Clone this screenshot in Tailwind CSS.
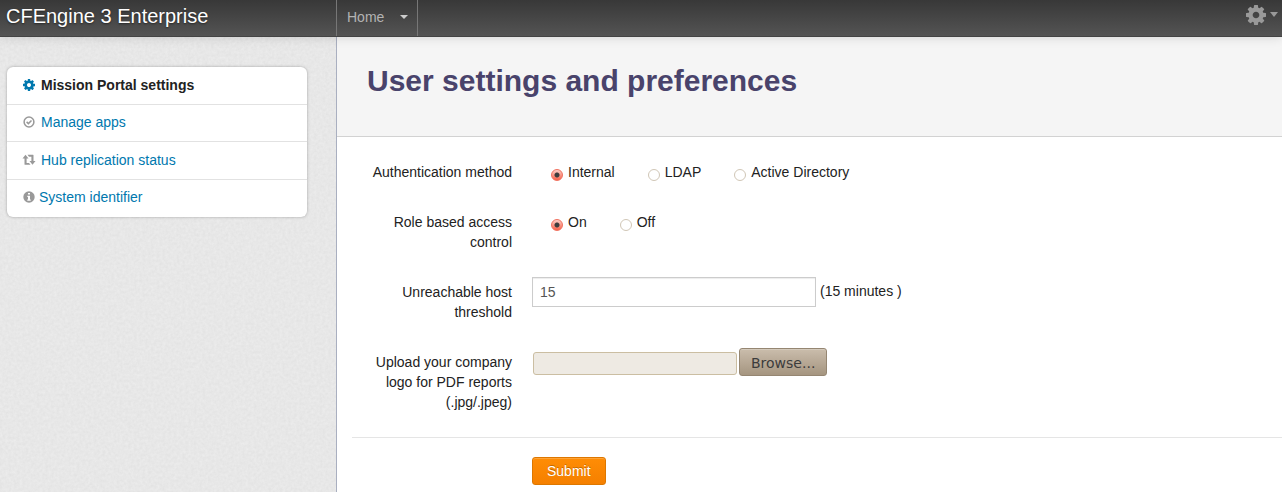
<!DOCTYPE html>
<html lang="en">
<head>
<meta charset="utf-8">
<meta name="viewport" content="width=device-width, initial-scale=1">
<title>CFEngine 3 Enterprise</title>
<script src="https://cdn.jsdelivr.net/npm/@tailwindcss/browser@4"></script>
</head>
<body class="flex min-h-screen flex-col bg-white font-['Liberation_Sans',Arial,sans-serif] text-sm leading-5 text-[#222222]">
<svg class="hidden">
  <symbol id="cog" viewBox="0 128 1536 1536"><path d="M1024 896q0-106-75-181t-181-75-181 75-75 181 75 181 181 75 181-75 75-181zm512-109v222q0 12-8 23t-20 13l-185 28q-19 54-39 91 35 50 107 138 10 12 10 25t-9 23q-27 37-99 108t-94 71q-12 0-26-9l-138-108q-44 23-91 38-16 136-29 186-7 28-36 28h-222q-14 0-24.500-8.500t-11.500-21.500l-28-184q-49-16-90-37l-141 107q-10 9-25 9-14 0-25-11-126-114-165-168-7-10-7-23 0-12 8-23 15-21 51-66.500t54-70.500q-27-50-41-99l-183-27q-13-2-21-12.500t-8-23.500v-222q0-12 8-23t19-13l186-28q14-46 39-92-40-57-107-138-10-12-10-24 0-10 9-23 26-36 98.500-107.500t94.500-71.500q13 0 26 10l138 107q44-23 91-38 16-136 29-186 7-28 36-28h222q14 0 24.500 8.500t11.500 21.500l28 184q49 16 90 37l142-107q9-9 24-9 13 0 25 10 129 119 165 170 7 8 7 22 0 12-8 23-15 21-51 66.500t-54 70.500q26 50 41 98l183 28q13 2 21 12.500t8 23.500z"/></symbol>
</svg>

<header class="relative z-10 flex h-[37px] shrink-0 border-b border-[#444444] bg-linear-to-b from-[#383838] to-[#545454] shadow-[0_1px_10px_rgba(0,0,0,0.12)]">
  <a href="#" class="w-[336px] shrink-0 truncate pl-1.5 text-xl leading-8 text-white [text-shadow:0_1px_2px_rgba(0,0,0,0.5)]">CFEngine 3 Enterprise</a>
  <nav class="flex flex-1 justify-between">
    <button type="button" class="flex items-center gap-4 border-x border-[#777777] px-[9px] pl-2.5 pb-0.5 text-[#b3b3b3]">Home
      <svg class="-mt-px h-1 w-2 fill-[#cccccc]" viewBox="0 0 8 4"><path d="M0 0h8L4 4z"/></svg>
    </button>
    <button type="button" aria-label="Settings" class="flex items-center gap-1 pr-1 pb-[7px] text-[#999999]">
      <svg class="size-5 fill-current"><use href="#cog"/></svg>
      <svg class="h-[5px] w-2 fill-current" viewBox="0 0 8 5"><path d="M0 0h8L4 5z"/></svg>
    </button>
  </nav>
</header>

<div class="flex flex-1">
  <aside class="relative w-[337px] shrink-0 border-r border-[#a9afc0] bg-[#e6e6e6] pt-[30px] pr-[29px] pl-[7px]">
    <svg class="absolute inset-0 h-full w-full" aria-hidden="true">
      <filter id="grain" x="0" y="0" width="100%" height="100%" color-interpolation-filters="sRGB">
        <feTurbulence type="fractalNoise" baseFrequency="0.35" numOctaves="3" seed="4"/>
        <feColorMatrix type="matrix" values="0.05 0 0 0 0.882  0.05 0 0 0 0.882  0.05 0 0 0 0.882  0 0 0 0 1"/>
      </filter>
      <rect width="100%" height="100%" filter="url(#grain)"/>
    </svg>
    <ul class="relative grid min-h-[150px] auto-rows-fr divide-y divide-[#e2e2e2] rounded-md bg-white text-[#0078ae] shadow-[0_0_3px_rgba(0,0,0,0.3)]">
      <li class="flex items-center px-4"><a href="#" class="flex items-center gap-1.5 font-bold text-[#222222]">
        <svg class="size-3 fill-[#0078ae]"><use href="#cog"/></svg>Mission Portal settings</a></li>
      <li class="flex items-center px-4 pb-px"><a href="#" class="flex items-center gap-1.5">
        <svg class="size-3 fill-none stroke-[#999999]" viewBox="0 0 12 12"><circle cx="6" cy="6" r="4.900" stroke-width="1.500"/><path d="M3.600 5.900L5.400 7.600 8.500 4.500" stroke-width="1.500"/></svg>Manage apps</a></li>
      <li class="flex items-center px-4"><a href="#" class="flex items-center gap-1.5">
        <svg class="size-3 overflow-visible fill-[#999999]" viewBox="0 0 12 12"><path d="M2.500 .8L5.500 4.500H3.600V8.900H6L7.500 10.800H2Q1.500 10.800 1.500 10.300V4.500H-.5zM9.500 10.800L6.500 7.100H8.400V2.700H6L4.500 .8H10Q10.500 .8 10.500 1.300V7.100H12.500z"/></svg>Hub replication status</a></li>
      <li class="flex items-center px-4 pb-0.5"><a href="#" class="flex items-center gap-1">
        <svg class="size-3" viewBox="0 0 12 12"><circle cx="6" cy="6" r="5.700" fill="#999999"/><path d="M5 2h2v1.600H5zM4.300 4.700H7V8.400h.7v1.300H4.300V8.400H5V6h-.7z" fill="#fff"/></svg>System identifier</a></li>
    </ul>
  </aside>

  <main class="min-w-0 flex-1">
    <div class="border-b border-[#d2d2d2] bg-[#f5f5f5] px-[30px] pt-6 pb-[35px]">
      <h1 class="text-[30px] leading-10 font-bold text-[#49436b]">User settings and preferences</h1>
    </div>
    <form class="pl-[15px]">
      <div class="flex flex-col gap-[30px] pt-[25px] pb-[25px]">
        <div role="radiogroup" aria-labelledby="auth" class="flex gap-5">
          <span id="auth" class="w-40 shrink-0 text-right">Authentication method</span>
          <div class="flex flex-wrap gap-x-[33px] pl-[19px]">
            <label class="flex gap-[5px]"><input type="radio" name="auth" checked class="mt-[7px] size-3 appearance-none rounded-full border border-[#d0c6b6] checked:border-[#f0705e] checked:bg-[radial-gradient(circle,#3c3c3c_2px,transparent_3px),linear-gradient(#fbd0c9,#f96048)]">Internal</label>
            <label class="flex gap-[5px]"><input type="radio" name="auth" class="mt-[7px] size-3 appearance-none rounded-full border border-[#d0c6b6] checked:border-[#f0705e] checked:bg-[radial-gradient(circle,#3c3c3c_2px,transparent_3px),linear-gradient(#fbd0c9,#f96048)]">LDAP</label>
            <label class="flex gap-[5px]"><input type="radio" name="auth" class="mt-[7px] size-3 appearance-none rounded-full border border-[#d0c6b6] checked:border-[#f0705e] checked:bg-[radial-gradient(circle,#3c3c3c_2px,transparent_3px),linear-gradient(#fbd0c9,#f96048)]">Active Directory</label>
          </div>
        </div>
        <div role="radiogroup" aria-labelledby="rbac" class="flex gap-5">
          <span id="rbac" class="w-40 shrink-0 pl-5 text-right">Role based access control</span>
          <div class="flex gap-x-[33px] pl-[19px]">
            <label class="flex gap-[5px]"><input type="radio" name="rbac" checked class="mt-[7px] size-3 appearance-none rounded-full border border-[#d0c6b6] checked:border-[#f0705e] checked:bg-[radial-gradient(circle,#3c3c3c_2px,transparent_3px),linear-gradient(#fbd0c9,#f96048)]">On</label>
            <label class="flex gap-[5px]"><input type="radio" name="rbac" class="mt-[7px] size-3 appearance-none rounded-full border border-[#d0c6b6] checked:border-[#f0705e] checked:bg-[radial-gradient(circle,#3c3c3c_2px,transparent_3px),linear-gradient(#fbd0c9,#f96048)]">Off</label>
          </div>
        </div>
        <div class="flex gap-5">
          <label for="threshold" class="w-40 shrink-0 text-right">Unreachable host<br>threshold</label>
          <div class="-mt-[5px] -mb-5 flex items-start gap-1">
            <input id="threshold" type="text" value="15" class="h-[30px] w-[284px] border border-[#cccccc] px-[7px] text-[#555555] shadow-[inset_0_1px_1px_rgba(0,0,0,0.075)]">
            <span class="pt-1">(15 minutes )</span>
          </div>
        </div>
        <div class="flex gap-5">
          <label for="logo" class="w-40 shrink-0 text-right">Upload your company logo for PDF reports (.jpg/.jpeg)</label>
          <div class="relative -mt-1 flex items-start gap-0.5 pl-px">
            <input id="logo" type="file" accept=".jpg,.jpeg" class="sr-only">
            <input type="text" readonly aria-label="Selected file" class="mt-1 h-[23px] w-[204px] rounded-[3px] border border-[#cbbea2] bg-[#eeeae3]">
            <button type="button" onclick="document.getElementById('logo').click()" class="h-7 rounded-[3px] border border-[#958672] bg-linear-to-b from-[#cabdac] to-[#a59580] px-[11px] pt-0.5 font-['DejaVu_Sans',sans-serif] text-sm text-[#3c3c3c] shadow-[inset_0_1px_0_rgba(255,255,255,0.2)]">Browse...</button>
          </div>
        </div>
      </div>
      <div class="border-t border-[#e5e5e5] pt-[19px] pl-[180px]">
        <button type="submit" class="h-7 rounded-[3px] border border-[#dd7700] bg-linear-to-b from-[#ff8d05] to-[#f58000] px-3.5 text-white shadow-[inset_0_1px_0_rgba(255,255,255,0.2)] [text-shadow:0_-1px_0_rgba(0,0,0,0.25)]">Submit</button>
      </div>
    </form>
  </main>
</div>
</body>
</html>
